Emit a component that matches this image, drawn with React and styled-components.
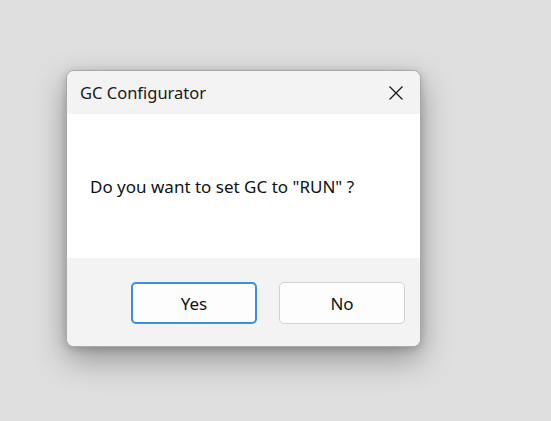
import React from "react";
import styled, { createGlobalStyle } from "styled-components";

const Global = createGlobalStyle`
  html, body { margin: 0; padding: 0; background: #dfdfdf; }
  body { font-family: "Noto Sans", "Open Sans", sans-serif; }
`;

const Page = styled.div`
  width: 551px;
  height: 421px;
  box-sizing: border-box;
  padding: 70px 0 0 66px;
  overflow: hidden;
`;

const Dialog = styled.div`
  width: 355px;
  height: 277px;
  box-sizing: border-box;
  border: 1px solid #a9a9a9;
  border-radius: 8px;
  overflow: hidden;
  display: flex;
  flex-direction: column;
  background: #f3f3f3;
  box-shadow: 0 12px 32px rgba(0, 0, 0, 0.34), 0 2px 8px rgba(0, 0, 0, 0.18);
`;

const TitleBar = styled.div`
  height: 43px;
  display: flex;
  align-items: center;
  justify-content: space-between;
  padding: 0 16px 0 13px;
  background: #f3f3f3;
`;

const Title = styled.span`
  font-size: 16.5px;
  color: #1a1a1a;
`;

const CloseButton = styled.div`
  width: 16px;
  height: 16px;
  display: flex;
  align-items: center;
  justify-content: center;
`;

const Content = styled.div`
  height: 144px;
  background: #ffffff;
  display: flex;
  align-items: center;
  padding: 0 23px;
`;

const Message = styled.span`
  font-size: 17px;
  color: #111;
`;

const Footer = styled.div`
  flex: 1;
  display: flex;
  justify-content: flex-end;
  align-items: flex-start;
  gap: 22px;
  padding: 24px 15px 0 0;
  background: #f3f3f3;
`;

const Button = styled.button`
  width: 126px;
  height: 42px;
  box-sizing: border-box;
  border-radius: 5px;
  border: ${(p) => (p.$primary ? "2px solid #3b8ee0" : "1px solid #d2d2d2")};
  background: #fdfdfd;
  font-family: "Noto Sans", "Open Sans", sans-serif;
  font-size: 17px;
  color: #111;
  display: flex;
  align-items: center;
  justify-content: center;
  padding: 0;
`;

export default function App() {
  return (
    <>
      <Global />
      <Page>
        <Dialog>
          <TitleBar>
            <Title>GC Configurator</Title>
            <CloseButton>
              <svg width="16" height="16" viewBox="0 0 16 16">
                <path d="M1.5 1.5 L14.5 14.5 M14.5 1.5 L1.5 14.5" stroke="#1a1a1a" strokeWidth="1.3" fill="none" />
              </svg>
            </CloseButton>
          </TitleBar>
          <Content>
            <Message>Do you want to set GC to "RUN" ?</Message>
          </Content>
          <Footer>
            <Button $primary>Yes</Button>
            <Button>No</Button>
          </Footer>
        </Dialog>
      </Page>
    </>
  );
}
